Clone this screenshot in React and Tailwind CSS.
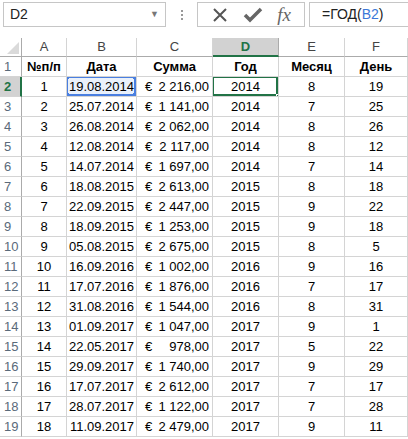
import React from 'react';

const rows = [
  [1, '19.08.2014', '2 216,00', 2014, 8, 19],
  [2, '25.07.2014', '1 141,00', 2014, 7, 25],
  [3, '26.08.2014', '2 062,00', 2014, 8, 26],
  [4, '12.08.2014', '2 117,00', 2014, 8, 12],
  [5, '14.07.2014', '1 697,00', 2014, 7, 14],
  [6, '18.08.2015', '2 613,00', 2015, 8, 18],
  [7, '22.09.2015', '2 447,00', 2015, 9, 22],
  [8, '18.09.2015', '1 253,00', 2015, 9, 18],
  [9, '05.08.2015', '2 675,00', 2015, 8, 5],
  [10, '16.09.2016', '1 002,00', 2016, 9, 16],
  [11, '17.07.2016', '1 876,00', 2016, 7, 17],
  [12, '31.08.2016', '1 544,00', 2016, 8, 31],
  [13, '01.09.2017', '1 047,00', 2017, 9, 1],
  [14, '22.05.2017', '978,00', 2017, 5, 22],
  [15, '29.09.2017', '1 740,00', 2017, 9, 29],
  [16, '17.07.2017', '2 612,00', 2017, 7, 17],
  [17, '28.07.2017', '1 122,00', 2017, 7, 28],
  [18, '11.09.2017', '2 479,00', 2017, 9, 11],
];

const cols = 'grid grid-cols-[22px_45px_70px_76px_66px_66px_63px]';
const cell = 'h-[20px] border-r border-b border-[#d4d4d4] flex items-center px-[2px] overflow-hidden whitespace-nowrap';

const Handle = ({ className }) => (
  <span className={`absolute w-[5px] h-[5px] bg-[#4a7fe0] ${className}`} />
);

const FormulaBar = () => (
  <div className="h-[38px] flex items-start pt-[2px] bg-white">
    <div className="ml-[3px] w-[163px] h-[25px] border border-[#c6c6c6] flex items-center pl-[6px] pr-[6px] justify-between">
      <span className="text-[14px] text-[#222]">D2</span>
      <span className="text-[9px] text-[#777]">▼</span>
    </div>
    <div className="w-[31px] h-[25px] flex flex-col items-center justify-center gap-[2px]">
      <span className="w-[2px] h-[2px] bg-[#999]" />
      <span className="w-[2px] h-[2px] bg-[#999]" />
      <span className="w-[2px] h-[2px] bg-[#999]" />
    </div>
    <div className="w-[108px] h-[25px] border border-[#c6c6c6] flex items-center justify-around px-[6px]">
      <svg width="18" height="18" viewBox="0 0 18 18">
        <path d="M3 3 L15 15 M15 3 L3 15" stroke="#555" strokeWidth="2" fill="none" />
      </svg>
      <svg width="20" height="18" viewBox="0 0 20 18">
        <path d="M2 9 L7 14 L18 3" stroke="#666" strokeWidth="3.5" fill="none" />
      </svg>
      <span className="text-[19px] italic text-[#666] leading-none" style={{ fontFamily: '"Liberation Serif", serif' }}>fx</span>
    </div>
    <div className="ml-[4px] flex-1 h-[25px] border-l border-t border-b border-[#c6c6c6] flex items-center pl-[12px] text-[14px] text-[#222]">
      =ГОД(<span className="text-[#3b78d8]">B2</span>)
    </div>
  </div>
);

const ColHeader = () => (
  <div className={cols}>
    <div className="h-[19px] border-r border-b border-[#ababab] relative">
      <span className="absolute right-[2px] bottom-[2px] w-0 h-0 border-l-[12px] border-l-transparent border-b-[12px] border-b-[#dadada]" />
    </div>
    {['A', 'B', 'C', 'D', 'E', 'F'].map((c) =>
      c === 'D' ? (
        <div key={c} className="h-[19px] bg-[#d2d2d2] border-r border-[#ababab] border-b-2 border-b-[#217346] flex items-center justify-center text-[13px] font-bold text-[#217346]">
          {c}
        </div>
      ) : (
        <div key={c} className="h-[19px] border-r border-b border-r-[#d4d4d4] border-b-[#ababab] flex items-center justify-center text-[13px] text-[#444]">
          {c}
        </div>
      )
    )}
  </div>
);

const RowNum = ({ n, sel }) => (
  <div
    className={
      sel
        ? 'h-[20px] bg-[#d2d2d2] border-r-2 border-r-[#217346] border-b border-b-[#d4d4d4] flex items-center pl-[4px] text-[13px] font-bold text-[#217346]'
        : 'h-[20px] border-r border-r-[#ababab] border-b border-b-[#d4d4d4] flex items-center pl-[4px] text-[13px] text-[#5a6a7a]'
    }
  >
    {n}
  </div>
);

export default function App() {
  return (
    <div className="w-[408px] h-[439px] overflow-hidden bg-white text-[13px] text-black" style={{ fontFamily: '"Liberation Sans", Arial, sans-serif' }}>
      <FormulaBar />
      <ColHeader />
      <div className={cols}>
        <RowNum n={1} />
        {['№п/п', 'Дата', 'Сумма', 'Год', 'Месяц', 'День'].map((h) => (
          <div key={h} className={`${cell} justify-center font-bold`}>{h}</div>
        ))}
      </div>
      {rows.map((r, i) => (
        <div key={i} className={cols}>
          <RowNum n={i + 2} sel={i === 0} />
          <div className={`${cell} justify-center`}>{r[0]}</div>
          <div className={`${cell} justify-end relative ${i === 0 ? 'bg-[#eaf1fb]' : ''}`}>
            {i === 0 && (
              <>
                <span className="absolute -left-[1px] -top-[1px] right-0 bottom-0 border-2 border-[#4a7fe0]" />
                <Handle className="-left-[3px] -top-[3px]" />
                <Handle className="-right-[2px] -top-[3px]" />
                <Handle className="-left-[3px] -bottom-[2px]" />
                <Handle className="-right-[2px] -bottom-[2px]" />
              </>
            )}
            <span className="relative">{r[1]}</span>
          </div>
          <div className={`${cell} justify-between`}>
            <span className="pl-[6px]">€</span>
            <span className="pr-[1px]">{r[2]}</span>
          </div>
          <div className={`${cell} justify-center relative`}>
            {i === 0 && (
              <>
                <span className="absolute -left-[1px] -top-[1px] right-0 bottom-0 border-2 border-[#217346]" />
                <span className="absolute -right-[3px] -bottom-[3px] w-[5px] h-[5px] bg-[#217346] border border-white" />
              </>
            )}
            <span className="relative">{r[3]}</span>
          </div>
          <div className={`${cell} justify-center`}>{r[4]}</div>
          <div className={`${cell} justify-center`}>{r[5]}</div>
        </div>
      ))}
    </div>
  );
}
